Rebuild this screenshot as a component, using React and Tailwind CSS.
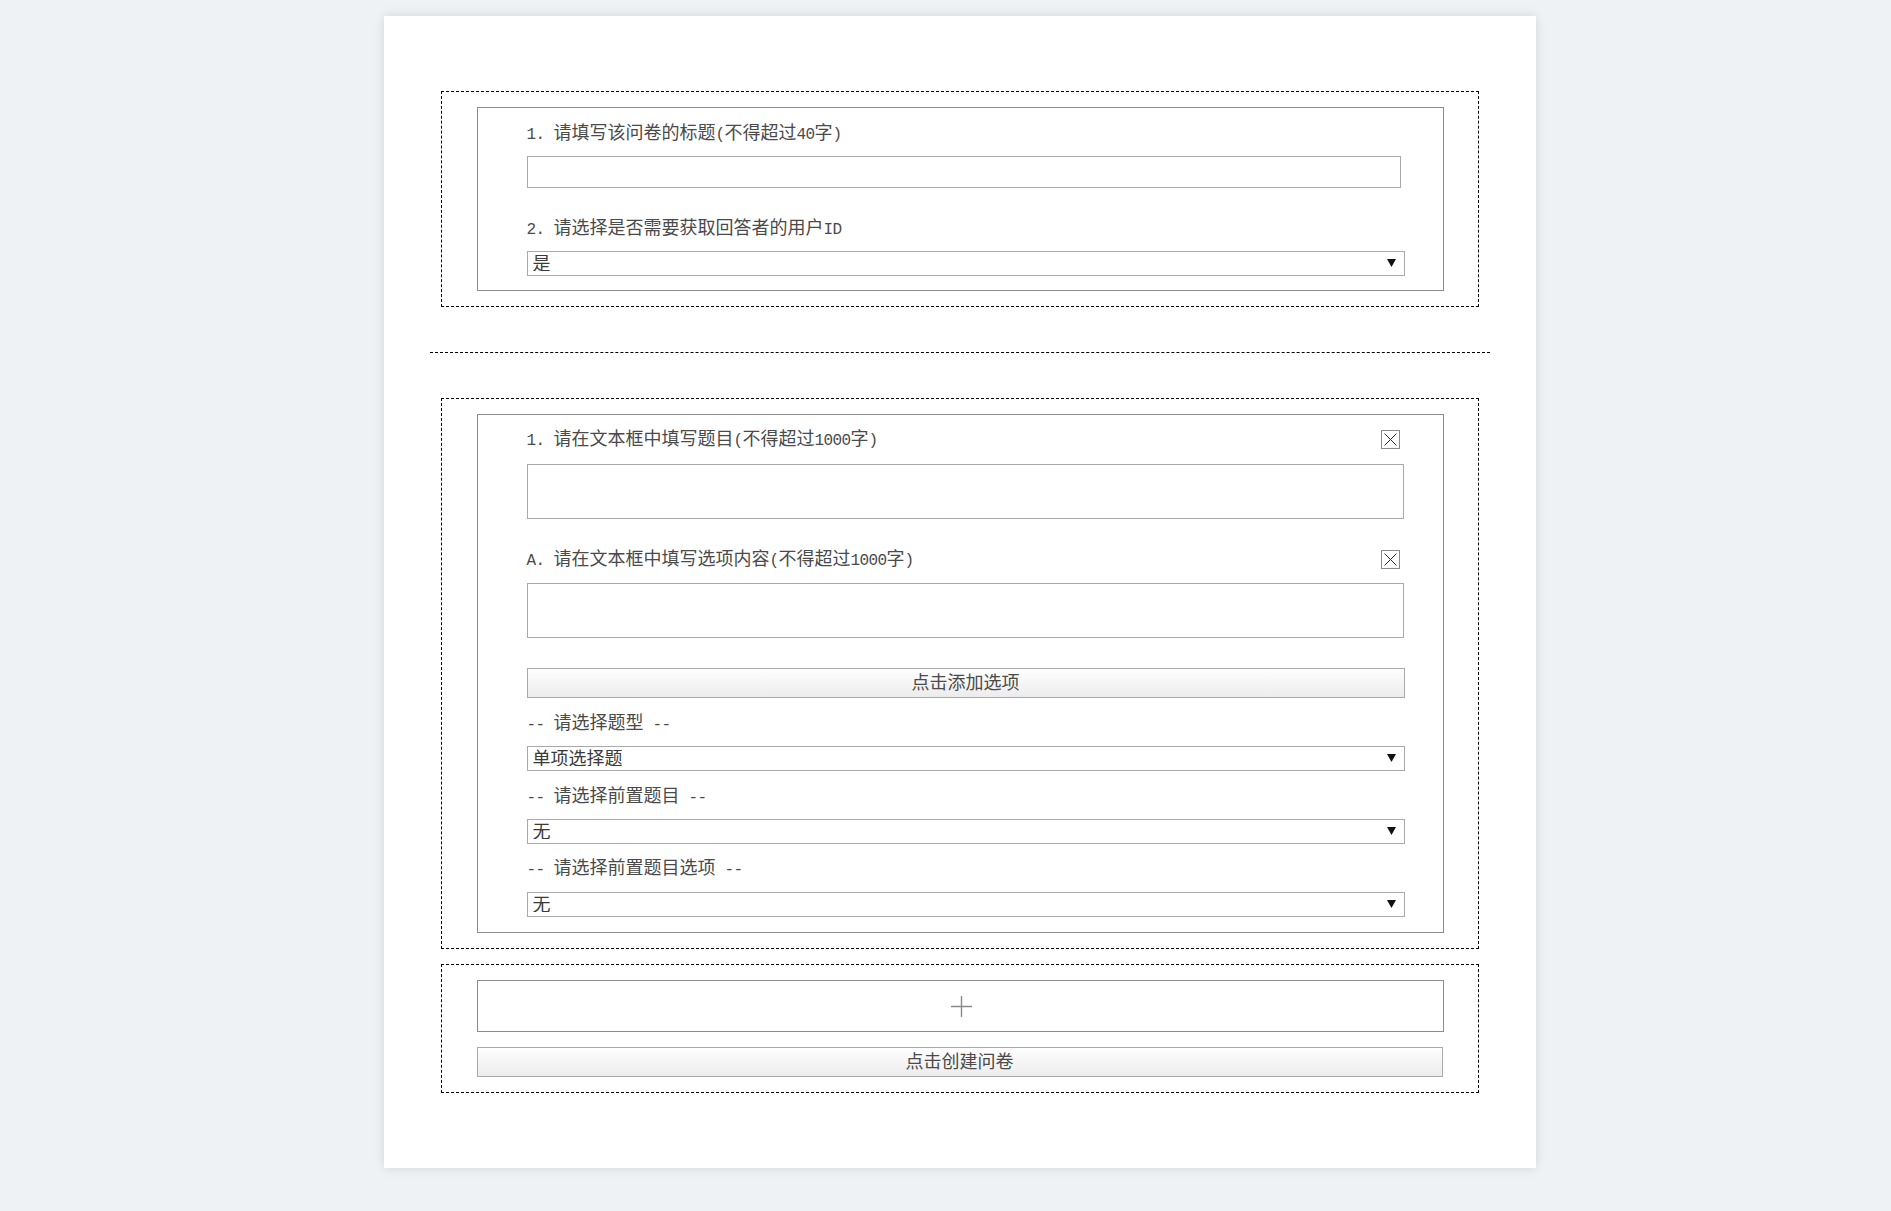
import React from "react";

function Txt({ s }) {
  const parts = s.split(/([\x00-\x7F]+)/).filter(Boolean);
  return (
    <>
      {parts.map((p, i) =>
        /^[\x00-\x7F]+$/.test(p) ? (
          <span
            key={i}
            className="whitespace-pre font-['Liberation_Mono',monospace] text-[16px] tracking-[-0.6px]"
          >
            {p}
          </span>
        ) : (
          <span key={i}>{p}</span>
        )
      )}
    </>
  );
}

function Label({ s, className = "" }) {
  return (
    <div className={"h-[24px] leading-[20px] text-[18px] text-[#4a4a4a] whitespace-nowrap " + className}>
      <Txt s={s} />
    </div>
  );
}

function CloseBox() {
  return (
    <svg width="19" height="19" viewBox="0 0 19 19" className="mr-[4px] shrink-0">
      <rect x="0.5" y="0.5" width="18" height="18" fill="white" stroke="#8a8a8a" />
      <path d="M3.5 3.5L15.5 15.5M15.5 3.5L3.5 15.5" stroke="#2a2a3a" strokeWidth="1" />
    </svg>
  );
}

function Select({ value, className = "" }) {
  return (
    <div className={"relative h-[25px] w-[878px] " + className}>
      <select
        defaultValue={value}
        className="block h-full w-full appearance-none border border-[#a9a9a9] bg-white pl-[5px] pb-[4px] text-[18px] leading-none text-[#3a3a3a] outline-none font-['Noto_Sans_CJK_SC',sans-serif]"
      >
        <option value={value}>{value}</option>
      </select>
      <svg
        width="9"
        height="8"
        viewBox="0 0 9 8"
        className="pointer-events-none absolute right-[9px] top-[8px]"
      >
        <polygon points="0,0 9,0 4.5,8" fill="#111" />
      </svg>
    </div>
  );
}

function GrayButton({ label, className = "" }) {
  return (
    <button
      type="button"
      className={
        "flex items-center justify-center border border-[#a9a9a9] bg-linear-to-b from-[#fefefe] to-[#ececec] pb-[4px] text-[18px] leading-none text-[#4a4a4a] font-['Noto_Sans_CJK_SC',sans-serif] " +
        className
      }
    >
      {label}
    </button>
  );
}

export default function App() {
  return (
    <div className="min-h-screen bg-[#eef2f5] pt-[16px] pb-[40px] font-['Noto_Sans_CJK_SC',sans-serif]">
      <div className="ml-[384px] w-[1152px] bg-white pt-[75px] pb-[75px] shadow-[0_0_10px_rgba(0,0,0,0.12)]">
        {/* Section 1 */}
        <div className="mx-auto w-[1038px] border border-dashed border-black">
          <div className="mx-auto my-[15px] w-[967px] border border-[#8c8c8c] pl-[49px] pt-[13px] pb-[14px]">
            <Label s="1. 请填写该问卷的标题(不得超过40字)" />
            <input
              type="text"
              className="mt-[11px] block h-[32px] w-[874px] border border-[#a9a9a9] bg-white outline-none"
            />
            <Label s="2. 请选择是否需要获取回答者的用户ID" className="mt-[28px]" />
            <Select value="是" className="mt-[11px]" />
          </div>
        </div>

        {/* separator */}
        <div className="mx-auto my-[45px] h-0 w-[1060px] border-t border-dashed border-black" />

        {/* Section 2 */}
        <div className="mx-auto w-[1038px] border border-dashed border-black">
          <div className="mx-auto my-[15px] w-[967px] border border-[#8c8c8c] pl-[49px] pt-[12px] pb-[15px]">
            <div className="flex h-[24px] w-[877px] items-center justify-between">
              <Label s="1. 请在文本框中填写题目(不得超过1000字)" />
              <CloseBox />
            </div>
            <textarea className="mt-[13px] block h-[55px] w-[877px] resize-none border border-[#a9a9a9] bg-white outline-none" />
            <div className="mt-[28px] flex h-[24px] w-[877px] items-center justify-between">
              <Label s="A. 请在文本框中填写选项内容(不得超过1000字)" />
              <CloseBox />
            </div>
            <textarea className="mt-[12px] block h-[55px] w-[877px] resize-none border border-[#a9a9a9] bg-white outline-none" />
            <GrayButton label="点击添加选项" className="mt-[30px] h-[30px] w-[878px]" />
            <Label s="-- 请选择题型 --" className="mt-[13px]" />
            <Select value="单项选择题" className="mt-[11px]" />
            <Label s="-- 请选择前置题目 --" className="mt-[13px]" />
            <Select value="无" className="mt-[11px]" />
            <Label s="-- 请选择前置题目选项 --" className="mt-[12px]" />
            <Select value="无" className="mt-[12px]" />
          </div>
        </div>

        {/* Section 3 */}
        <div className="mx-auto mt-[15px] w-[1038px] border border-dashed border-black">
          <div className="mx-auto my-[15px] w-[967px]">
            <div className="flex h-[52px] w-[967px] items-center justify-center border border-[#8c8c8c] bg-white">
              <svg width="21" height="21" viewBox="0 0 21 21" className="ml-[2px]">
                <path d="M10.5 0V21M0 10.5H21" stroke="#8a8a8a" strokeWidth="1.4" />
              </svg>
            </div>
            <GrayButton label="点击创建问卷" className="mt-[15px] h-[30px] w-[966px]" />
          </div>
        </div>
      </div>
    </div>
  );
}
